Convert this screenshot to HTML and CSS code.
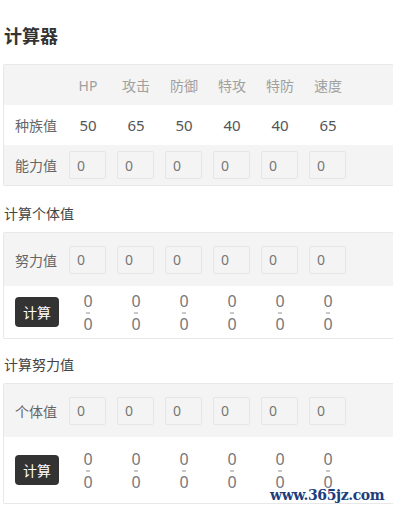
FILE: index.html
```html
<!DOCTYPE html>
<html lang="zh-CN">
<head>
  <meta charset="UTF-8">
  <meta name="viewport" content="width=device-width, initial-scale=1.0">
  <title>计算器</title>
  <link rel="stylesheet" href="styles.css">
</head>
<body>

<h1 class="title">计算器</h1>

<div class="panel">
  <div class="row row-head">
    <div class="label"></div>
    <div class="cell">HP</div>
    <div class="cell">攻击</div>
    <div class="cell">防御</div>
    <div class="cell">特攻</div>
    <div class="cell">特防</div>
    <div class="cell">速度</div>
  </div>
  <div class="row row-white">
    <div class="label">种族值</div>
    <div class="cell num">50</div>
    <div class="cell num">65</div>
    <div class="cell num">50</div>
    <div class="cell num">40</div>
    <div class="cell num">40</div>
    <div class="cell num">65</div>
  </div>
  <div class="row row-gray">
    <div class="label">能力值</div>
    <div class="cell"><input class="box" type="text" value="0"></div>
    <div class="cell"><input class="box" type="text" value="0"></div>
    <div class="cell"><input class="box" type="text" value="0"></div>
    <div class="cell"><input class="box" type="text" value="0"></div>
    <div class="cell"><input class="box" type="text" value="0"></div>
    <div class="cell"><input class="box" type="text" value="0"></div>
  </div>
</div>

<div class="section-title first">计算个体值</div>

<div class="panel">
  <div class="row row-gray tall">
    <div class="label">努力值</div>
    <div class="cell"><input class="box" type="text" value="0"></div>
    <div class="cell"><input class="box" type="text" value="0"></div>
    <div class="cell"><input class="box" type="text" value="0"></div>
    <div class="cell"><input class="box" type="text" value="0"></div>
    <div class="cell"><input class="box" type="text" value="0"></div>
    <div class="cell"><input class="box" type="text" value="0"></div>
  </div>
  <div class="row row-white result">
    <div class="label"><button class="btn">计算</button></div>
    <div class="cell range"><span>0</span><i></i><span>0</span></div>
    <div class="cell range"><span>0</span><i></i><span>0</span></div>
    <div class="cell range"><span>0</span><i></i><span>0</span></div>
    <div class="cell range"><span>0</span><i></i><span>0</span></div>
    <div class="cell range"><span>0</span><i></i><span>0</span></div>
    <div class="cell range"><span>0</span><i></i><span>0</span></div>
  </div>
</div>

<div class="section-title">计算努力值</div>

<div class="panel">
  <div class="row row-gray tall">
    <div class="label">个体值</div>
    <div class="cell"><input class="box" type="text" value="0"></div>
    <div class="cell"><input class="box" type="text" value="0"></div>
    <div class="cell"><input class="box" type="text" value="0"></div>
    <div class="cell"><input class="box" type="text" value="0"></div>
    <div class="cell"><input class="box" type="text" value="0"></div>
    <div class="cell"><input class="box" type="text" value="0"></div>
  </div>
  <div class="row row-white result last">
    <div class="label"><button class="btn">计算</button></div>
    <div class="cell range"><span>0</span><i></i><span>0</span></div>
    <div class="cell range"><span>0</span><i></i><span>0</span></div>
    <div class="cell range"><span>0</span><i></i><span>0</span></div>
    <div class="cell range"><span>0</span><i></i><span>0</span></div>
    <div class="cell range"><span>0</span><i></i><span>0</span></div>
    <div class="cell range"><span>0</span><i></i><span>0</span></div>
  </div>
</div>

<div class="watermark">www.365jz.com</div>

</body>
</html>
```

FILE: styles.css
```css
body {
  margin: 0;
  width: 393px;
  height: 514px;
  overflow: hidden;
  position: relative;
  font-family: "Noto Sans", "Noto Sans CJK SC", sans-serif;
  color: #555;
  background: #fff;
}
.title {
  margin: 26px 0 18px 4px;
  font-size: 18px;
  line-height: 20px;
  font-weight: bold;
  color: #333;
}
.panel {
  margin-left: 3px;
  width: 390px;
  box-sizing: border-box;
  border: 1px solid #e8e8e8;
  border-right: 0;
  border-radius: 2px 0 0 2px;
}
.row {
  display: flex;
  align-items: center;
  height: 40px;
}
.row-head {
  background: #f4f4f4;
  color: #a0a0a0;
}
.row-gray {
  background: #f4f4f4;
}
.row-white {
  background: #fff;
}
.tall {
  height: 53px;
}
.result {
  height: 52px;
}
.result.last {
  height: 66px;
}
.label {
  width: 60px;
  padding-left: 11px;
  box-sizing: border-box;
  font-size: 14px;
  color: #666;
}
.cell {
  width: 48px;
  text-align: center;
  font-size: 14px;
}
.num {
  font-size: 15px;
  color: #555;
}
.box {
  display: block;
  width: 37px;
  height: 28px;
  margin-left: 5px;
  padding: 0 0 0 7px;
  box-sizing: border-box;
  border: 1px solid #e6e6e6;
  border-radius: 2px;
  background: #f4f4f4;
  font-family: "Noto Sans", sans-serif;
  font-size: 14px;
  color: #777;
  outline: none;
}
.btn {
  width: 44px;
  height: 30px;
  border: 0;
  border-radius: 4px;
  background: #333;
  color: #fff;
  font-family: "Noto Sans CJK SC", sans-serif;
  font-size: 14px;
  padding: 0;
}
.range {
  display: flex;
  flex-direction: column;
  align-items: center;
  font-size: 16px;
  color: #777;
}
.range span {
  line-height: 16px;
}
.range i {
  display: block;
  width: 4px;
  height: 2px;
  margin: 3px 0 2px;
  background: #c8c8c8;
}
.section-title {
  margin: 16px 0 8px 4px;
  font-size: 14px;
  line-height: 20px;
  color: #444;
}
.section-title.first {
  margin-top: 18px;
}
.watermark {
  position: absolute;
  left: 270px;
  top: 487px;
  font-family: "DejaVu Serif", serif;
  font-weight: bold;
  font-size: 14px;
  line-height: 16px;
  color: #1d3d7c;
  letter-spacing: -0.4px;
}
```
